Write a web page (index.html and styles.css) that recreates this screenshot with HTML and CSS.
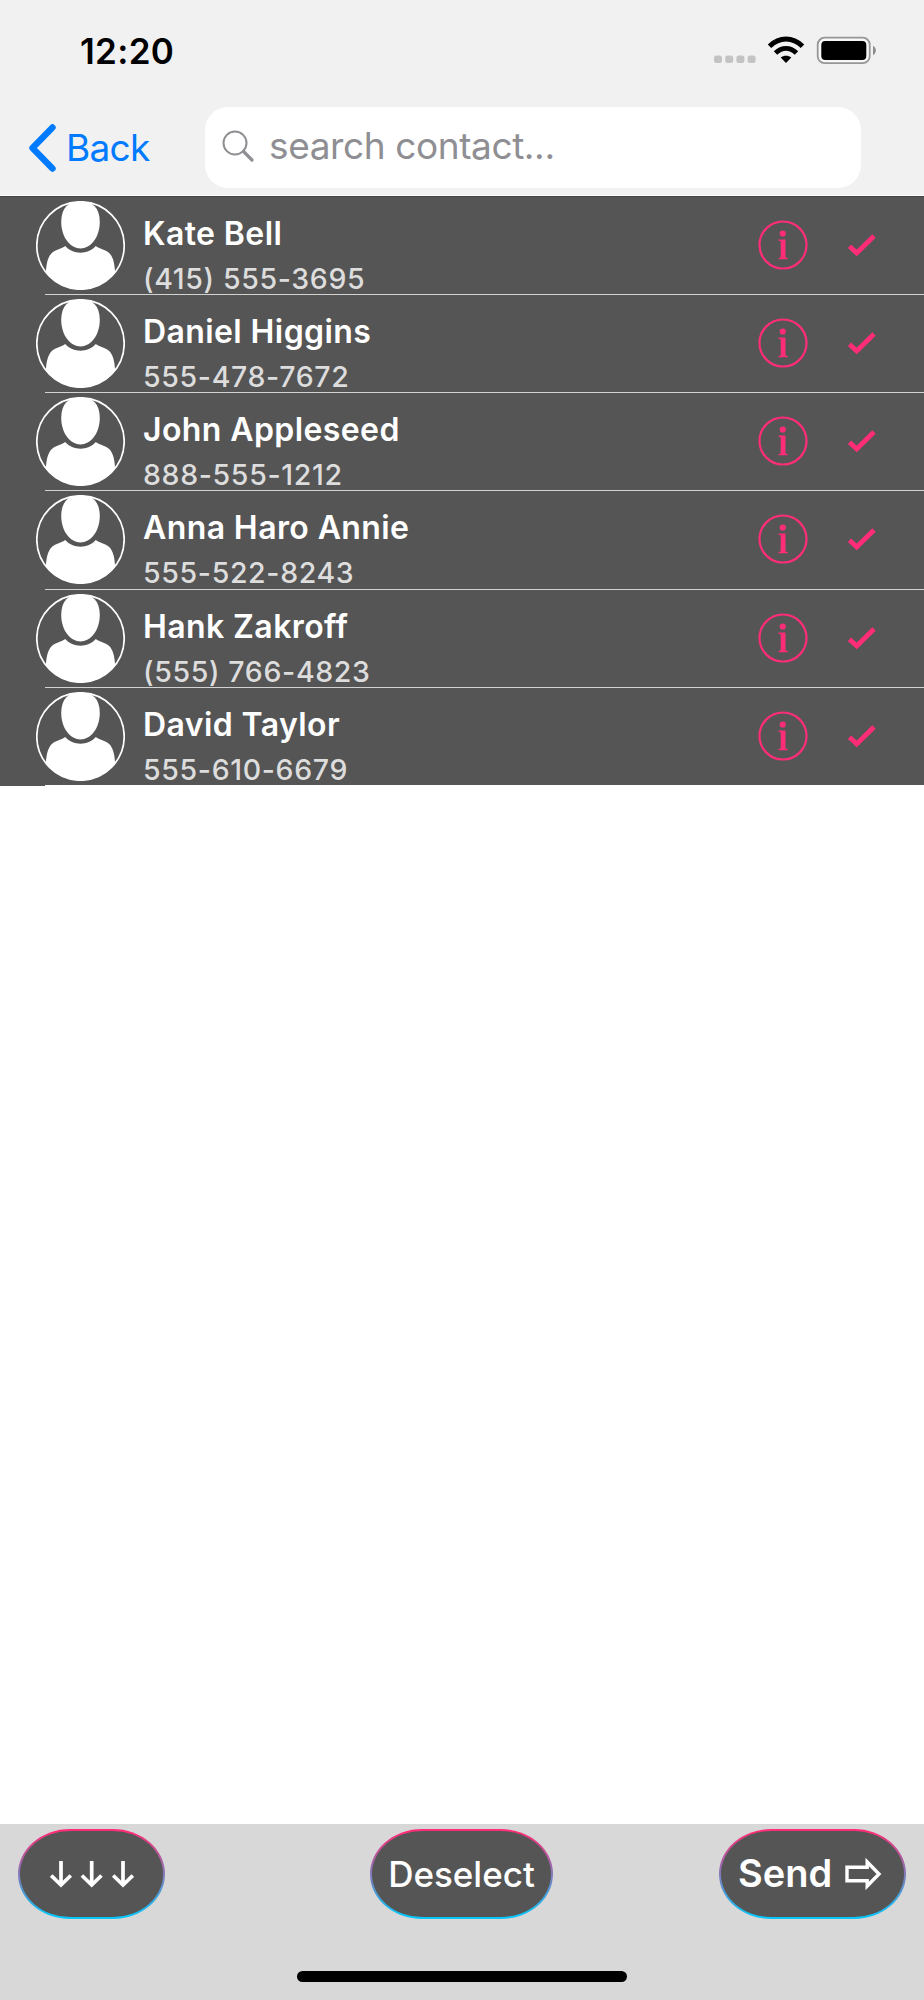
FILE: index.html
```html
<!DOCTYPE html>
<html lang="en">
<head>
<meta charset="utf-8">
<title>Contacts</title>
<link rel="stylesheet" href="styles.css">
</head>
<body>
<svg class="defs" width="0" height="0" aria-hidden="true">
  <symbol id="avatar" viewBox="0 0 90 90">
    <clipPath id="round"><circle cx="45" cy="45" r="44.5"/></clipPath>
    <g clip-path="url(#round)" fill="#fff">
      <path d="M45 0C57 0 64.5 7 64.5 21C64.5 37 55 48 45 48C35 48 25.500 37 25.500 21C25.500 7 33 0 45 0Z"/>
      <path d="M29.500 45.500C37.500 54.500 52.500 54.500 60.500 45.500C64 48.500 70 49 74 52.500C78 56.500 79.500 63 80 72V90H10V72C10.500 63 12 56.500 16 52.500C20 49 26 48.500 29.500 45.500Z"/>
    </g>
    <circle cx="45" cy="45" r="44.200" fill="none" stroke="#fff" stroke-width="1.700"/>
  </symbol>
  <symbol id="info" viewBox="0 0 50 50">
    <circle cx="25" cy="25" r="23.500" fill="none" stroke="#ff2d78" stroke-width="2.200"/>
    <circle cx="24.800" cy="13.500" r="3.100" fill="#ff2d78"/>
    <path d="M20.500 19.500H27.500V37.500L29.700 38V39.200H20.500V38L22.700 37.500V21.200L20.500 20.700Z" fill="#ff2d78"/>
  </symbol>
  <symbol id="check" viewBox="0 0 30 24">
    <path d="M2.500 13.200L9.700 20L27 3" fill="none" stroke="#ff2d78" stroke-width="4.800"/>
  </symbol>
</svg>
<header class="top">
  <div class="status">
    <span class="time">12:20</span>
    <svg class="indicators" width="164" height="30" viewBox="0 0 164 30">
      <g fill="#c3c3c3"><rect x="1" y="19.500" width="8" height="7.500" rx="2.500"/><rect x="12.200" y="19.500" width="8" height="7.500" rx="2.500"/><rect x="23.400" y="19.500" width="8" height="7.500" rx="2.500"/><rect x="34.600" y="19.500" width="8" height="7.500" rx="2.500"/></g>
      <path d="M56.500 10.300C66.500 .7 79.500 .7 89.500 10.300" fill="none" stroke="#000" stroke-width="5"/>
      <path d="M62.500 17C69 11 77 11 83.500 17" fill="none" stroke="#000" stroke-width="5"/>
      <path d="M67.700 21.500C70.700 19 75.300 19 78.300 21.500L73 27Z"/>
      <rect x="104.700" y="1.700" width="52" height="25.500" rx="7" fill="#f7f7f7" stroke="#969696" stroke-width="1.800"/>
      <rect x="108.300" y="5" width="45" height="19" rx="4"/>
      <path d="M160 9.800C163.800 12 163.800 17 160 19.200Z" fill="#8c8c8c"/>
    </svg>
  </div>
  <nav class="nav">
    <a class="back"><svg width="28" height="48" viewBox="0 0 28 48"><path d="M24.500 3.500L4.500 24L24.500 44.500" fill="none" stroke="#007aff" stroke-width="6.400" stroke-linecap="round" stroke-linejoin="round"/></svg><span>Back</span></a>
    <div class="search"><svg width="33" height="33" viewBox="0 0 33 33"><circle cx="13" cy="13" r="11.500" fill="none" stroke="#8e8e93" stroke-width="2"/><path d="M21.500 21.500L30 30" stroke="#8e8e93" stroke-width="3.200" stroke-linecap="round"/></svg><span>search contact...</span></div>
  </nav>
</header>
<main class="list">
  <div class="row"><svg class="avatar"><use href="#avatar"/></svg><div class="text"><div class="name">Kate Bell</div><div class="phone">(415) 555-3695</div></div><svg class="info"><use href="#info"/></svg><svg class="check"><use href="#check"/></svg></div>
  <div class="row"><svg class="avatar"><use href="#avatar"/></svg><div class="text"><div class="name">Daniel Higgins</div><div class="phone">555-478-7672</div></div><svg class="info"><use href="#info"/></svg><svg class="check"><use href="#check"/></svg></div>
  <div class="row"><svg class="avatar"><use href="#avatar"/></svg><div class="text"><div class="name">John Appleseed</div><div class="phone">888-555-1212</div></div><svg class="info"><use href="#info"/></svg><svg class="check"><use href="#check"/></svg></div>
  <div class="row"><svg class="avatar"><use href="#avatar"/></svg><div class="text"><div class="name">Anna Haro Annie</div><div class="phone">555-522-8243</div></div><svg class="info"><use href="#info"/></svg><svg class="check"><use href="#check"/></svg></div>
  <div class="row"><svg class="avatar"><use href="#avatar"/></svg><div class="text"><div class="name">Hank Zakroff</div><div class="phone">(555) 766-4823</div></div><svg class="info"><use href="#info"/></svg><svg class="check"><use href="#check"/></svg></div>
  <div class="row"><svg class="avatar"><use href="#avatar"/></svg><div class="text"><div class="name">David Taylor</div><div class="phone">555-610-6679</div></div><svg class="info"><use href="#info"/></svg><svg class="check"><use href="#check"/></svg></div>
</main>
<footer class="bottom">
  <div class="actions">
    <button class="pill pill-down" aria-label="Scroll down"><svg width="84" height="27" viewBox="0 0 84 27" fill="none" stroke="#fff" stroke-width="3.700"><path d="M11 0V24M1.200 14.500L11 24L20.800 14.500"/><path d="M41.700 0V24M31.900 14.500L41.700 24L51.500 14.500"/><path d="M73 0V24M63.200 14.500L73 24L82.800 14.500"/></svg></button>
    <button class="pill pill-deselect"><span>Deselect</span></button>
    <button class="pill pill-send"><span>Send</span><svg width="37" height="34" viewBox="0 0 37 34"><path d="M2 10.200H22.200V5L34 17L22.200 29V23.800H2Z" fill="none" stroke="#fff" stroke-width="3.400"/></svg></button>
  </div>
  <div class="home"></div>
</footer>
</body>
</html>
```
FILE: styles.css
```css
* { box-sizing: border-box; }
body {
  margin: 0;
  width: 924px;
  height: 2000px;
  display: flex;
  flex-direction: column;
  background: #fff;
  font-family: Inter, "Liberation Sans", sans-serif;
  white-space: nowrap;
}
svg { display: block; flex: none; }
.defs { position: absolute; }
.top { height: 196px; background: #f1f1f1; border-bottom: 1px solid #fff; }
.status { height: 107px; padding: 29px 47px 0 80px; display: flex; justify-content: space-between; }
.time { font-size: 35px; line-height: 44px; font-weight: 600; letter-spacing: .3px; }
.indicators { margin-top: 7px; }
.nav { display: flex; height: 81px; padding-left: 28px; }
.back { width: 177px; display: flex; padding-top: 17px; color: #007aff; font-size: 37px; line-height: 48px; letter-spacing: -.7px; }
.back span { margin-left: 10px; }
.search { width: 656px; height: 81px; border-radius: 23px; background: #fff; color: #8e8e93; display: flex; padding: 23px 0 0 17px; font-size: 37px; line-height: 46px; letter-spacing: -.4px; }
.search span { margin: -7px 0 0 14px; }
.list { height: 590px; border-top: 1px solid #444; background: #555; display: grid; grid-template-rows: repeat(6, minmax(0, 1fr)); }
.row { display: flex; align-items: flex-start; padding-left: 36px; background: linear-gradient(#d2d2d2, #d2d2d2) 45px 100% / 100% 1px no-repeat; }
.row:last-child { background-image: linear-gradient(#fff, #fff); }
.avatar { width: 89px; height: 89px; margin-top: 4px; }
.text { margin-left: 18px; width: 615px; color: #fff; }
.name { padding-top: 15px; font-size: 32px; line-height: 44px; font-weight: 600; letter-spacing: .4px; }
.phone { color: #ddd; font-size: 28.500px; line-height: 38px; margin-top: 4px; letter-spacing: .65px; font-weight: 450; }
.info { width: 50px; height: 50px; margin-top: 23px; }
.check { width: 30px; height: 24px; margin: 36px 0 0 39px; }
.bottom { margin-top: auto; height: 176px; padding: 5px 18px 0; background: #d8d8d8; }
.actions { display: flex; }
.pill {
  height: 90px;
  padding: 0;
  border: 2px solid transparent;
  border-radius: 52px / 45px;
  background: linear-gradient(#555, #555) padding-box, linear-gradient(#ff2d78 3%, #06c6fc 97%) border-box;
  color: #fff;
  font-family: inherit;
  display: flex;
  align-items: center;
}
.pill-down { width: 147px; justify-content: center; }
.pill-deselect { width: 183px; margin: 0 166px 0 205px; justify-content: center; font-size: 35px; font-weight: 500; }
.pill-send { width: 187px; padding-left: 17px; font-size: 38px; font-weight: 600; }
.pill-send span { margin-top: -2px; }
.pill-send svg { margin-left: 13px; }
.home { width: 330px; height: 11px; margin: 52px auto 0; border-radius: 6px; background: #000; }
```
